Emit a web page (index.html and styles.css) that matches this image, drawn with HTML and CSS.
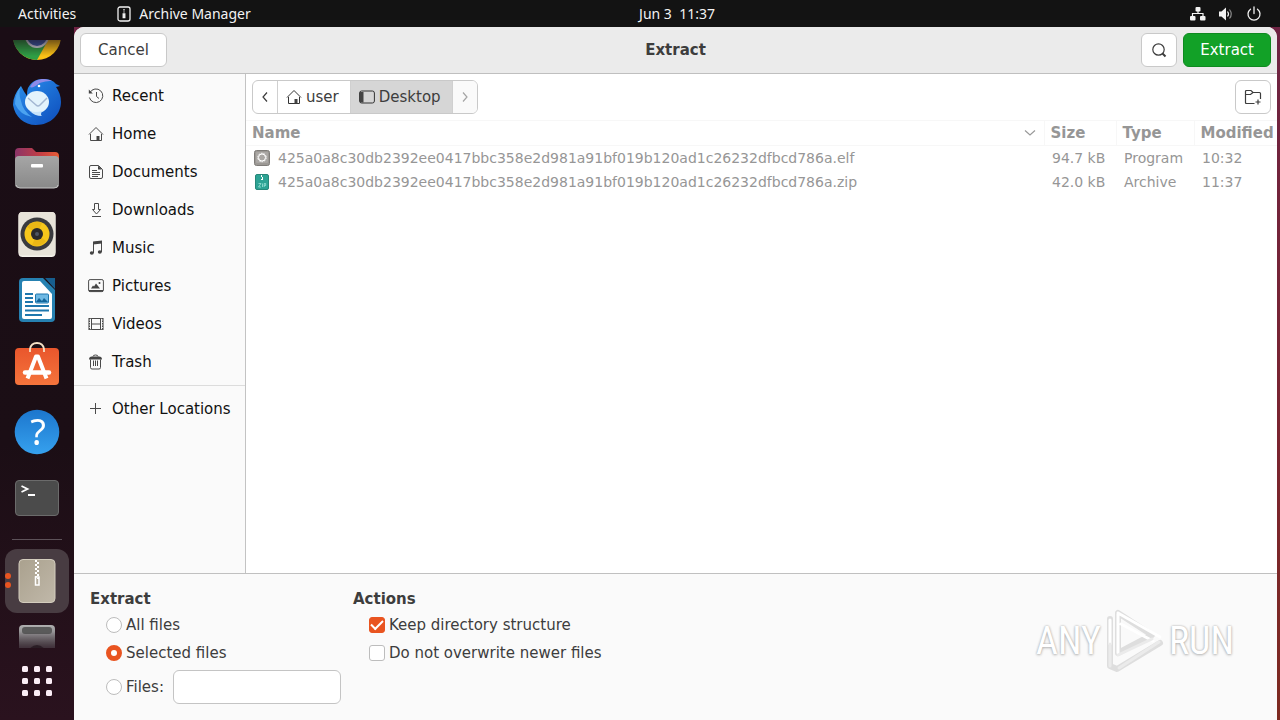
FILE: index.html
```html
<!DOCTYPE html>
<html lang="en">
<head>
<meta charset="utf-8">
<title>Extract</title>
<link rel="stylesheet" href="styles.css">
</head>
<body>
<header class="topbar">
  <div class="topbar-left">
    <button class="top-item">Activities</button>
    <button class="top-item app-menu">
      <svg width="14" height="16" viewBox="0 0 14 16" fill="none" stroke="#f2f2f2" stroke-width="1.3"><rect x="1" y="1" width="12" height="14" rx="2"/><path d="M7 3v1.500M7 5.500v1" /><path d="M6.200 8h1.600v3.500H6.200z" fill="#f2f2f2"/></svg>
      Archive Manager
    </button>
  </div>
  <button class="top-item clock">Jun 3&nbsp; 11:37</button>
  <div class="topbar-right">
    <svg width="16" height="16" viewBox="0 0 16 16" fill="#f2f2f2"><rect x="5.500" y="1" width="5" height="4.500" rx="1"/><rect x="0" y="10" width="5.500" height="4.500" rx="1"/><rect x="10" y="10" width="5.500" height="4.500" rx="1"/><path d="M2.500 10V7.500h10.500V10M8 5v3" fill="none" stroke="#f2f2f2" stroke-width="1.200"/></svg>
    <svg width="16" height="16" viewBox="0 0 16 16" fill="none"><path d="M1 5.500h2.500L8 1.500v13L3.500 10.500H1z" fill="#f2f2f2"/><path d="M9.500 5.500q2 2.500 0 5" stroke="#f2f2f2" stroke-width="1.200"/><path d="M11.500 3.500q3.500 4.500 0 9" stroke="#8a8a8a" stroke-width="1.200"/></svg>
    <svg width="16" height="16" viewBox="0 0 16 16" fill="none" stroke="#f2f2f2" stroke-width="1.300" stroke-linecap="round"><path d="M4.500 3.200a6 6 0 1 0 7 0M8 1v6.500"/></svg>
  </div>
</header>
<div class="desktop">
  <nav class="dock" aria-label="Dock">
    <div class="dock-scroll">
      <button class="dock-item" aria-label="Chrome"><svg width="48" height="48" viewBox="0 0 48 48"><circle cx="24" cy="24" r="24" fill="#fbc116"/><path d="M24 24 3 12A24 24 0 0 0 24 48L34 30z" fill="#2f9e45"/><path d="M24 24H45A24 24 0 0 0 3 12z" fill="#e33b2e"/><circle cx="24" cy="24" r="12" fill="#d8dce8"/><circle cx="24" cy="24" r="10" fill="#3b5cae"/></svg></button>
      <button class="dock-item" aria-label="Thunderbird"><svg width="48" height="48" viewBox="0 0 48 48"><defs><linearGradient id="tb" x1="0" y1="0" x2="1" y2="1"><stop offset="0" stop-color="#2c93ef"/><stop offset="1" stop-color="#0d4cbb"/></linearGradient></defs><path d="M8 8Q0 17 0 27c2 12 11 20 23 20 15 0 25-11 25-23 0-6-2-11-5-15l4-1-4-2C40 2 35 1 30 1c-7 0-12 3-15 9-1 3-1 5-1 8-2-3-4-6-6-10z" fill="url(#tb)"/><path d="M17 9c3-6 8-8 14-8 3 0 6 1 8 2-6 0-12 1-15 4-3 2-5 3-7 2z" fill="#8f8be8"/><path d="M8 8q-3 7 0 15 2 10 11 16-12-2-17-13Q2 16 8 8z" fill="#4ba3f0"/><ellipse cx="24" cy="24" rx="12" ry="11" fill="#e3f3fc"/><path d="m15 20 8 7q2 2 4 0l7-7" fill="none" stroke="#a3b7d2" stroke-width="1.500"/><path d="M17 33q6 2 12 0-2 4 0 5-8 0-12-5z" fill="#c7e3fa"/><circle cx="26" cy="8" r="1.300" fill="#fff"/></svg></button>
      <button class="dock-item" aria-label="Files"><svg width="48" height="48" viewBox="0 0 48 48"><defs><linearGradient id="fo"><stop stop-color="#8b3468"/><stop offset=".6" stop-color="#c63f43"/><stop offset="1" stop-color="#e95e36"/></linearGradient><linearGradient id="fg" x2="0" y2="1"><stop stop-color="#a6a6a6"/><stop offset="1" stop-color="#898989"/></linearGradient></defs><path d="M2 14V8q0-4 4-4h13l4 4h19q4 0 4 4v9H2z" fill="url(#fo)"/><rect x="2" y="12" width="44" height="32" rx="4" fill="url(#fg)"/><path d="M3 41q1 3 4 3h34q4 0 4-3" fill="none" stroke="#c5c5c5"/><rect x="18" y="20" width="12" height="3.500" rx="1" fill="#fff"/></svg></button>
      <button class="dock-item" aria-label="Rhythmbox"><svg width="48" height="48" viewBox="0 0 48 48"><rect x="5.500" y="2" width="37" height="45" rx="4" fill="#f6f3ec"/><rect x="5.500" y="2" width="37" height="43.500" rx="4" fill="#e8e3d9"/><circle cx="24" cy="24" r="16.500" fill="#3a3a3e"/><circle cx="24" cy="24" r="12.500" fill="#f6c61b"/><path d="M24 24 14 17a12 12 0 0 1 15-4zM24 24l9 7a12 12 0 0 1-14 4z" fill="#eab715"/><circle cx="24" cy="24" r="6" fill="#29292b"/><circle cx="24" cy="24" r="2" fill="#4d5563"/></svg></button>
      <button class="dock-item" aria-label="Writer"><svg width="48" height="48" viewBox="0 0 48 48"><path d="M10 2h20l12 12v28q0 4-4 4H10q-4 0-4-4V6q0-4 4-4z" fill="#2681b1"/><path d="M32 2h10v11z" fill="#175e8e"/><path d="M11 5h16l12 13v23q0 2-2 2H11q-2 0-2-2V7q0-2 2-2z" fill="#fff"/><path d="M12 18h8M12 22h8M12 26h8M12 30h24M12 34.500h24M12 39h17" stroke="#1e77ad" stroke-width="2"/><rect x="22.500" y="18" width="13" height="9" rx="1" fill="#6fb9e4" stroke="#1e77ad"/><path d="m23 26 3-4 3 3 2-3 4 4z" fill="#12659a"/></svg></button>
      <button class="dock-item" aria-label="Software"><svg width="48" height="48" viewBox="0 0 48 48"><defs><linearGradient id="sw" x2="0" y2="1"><stop stop-color="#e9562c"/><stop offset="1" stop-color="#f5743c"/></linearGradient></defs><rect x="2" y="6" width="44" height="37" rx="4" fill="url(#sw)"/><path d="M17 10V7q1-6 7-6t7 6v3" fill="none" stroke="#f6e1c6" stroke-width="1.800"/><path d="M14.500 36.500 23 14.500h2l8.500 22" fill="none" stroke="#fff" stroke-width="4" stroke-linejoin="round"/><path d="M12 30.500h24" stroke="#fff" stroke-width="4.500" stroke-linecap="round"/></svg></button>
      <button class="dock-item" aria-label="Help"><svg width="48" height="48" viewBox="0 0 48 48"><defs><linearGradient id="he" x2="0" y2="1"><stop stop-color="#1c76cd"/><stop offset="1" stop-color="#36a1ee"/></linearGradient></defs><circle cx="24" cy="24" r="22.300" fill="url(#he)"/><text x="25" y="37" text-anchor="middle" class="help-mark">?</text></svg></button>
      <button class="dock-item" aria-label="Terminal"><svg width="48" height="48" viewBox="0 0 48 48"><rect x="2.500" y="6.500" width="43" height="35" rx="3.500" fill="#4b4b4b" stroke="#6b6b6b"/><path d="m8.500 12 6 3-6 3M15 21h7" fill="none" stroke="#fff" stroke-width="1.800"/></svg></button>
      <hr class="dock-sep">
      <button class="dock-item active" aria-label="Archive Manager"><svg width="48" height="48" viewBox="0 0 48 48"><defs><linearGradient id="ar" x2="1" y2="1"><stop stop-color="#aaa18e"/><stop offset="1" stop-color="#c0b8a9"/></linearGradient></defs><rect x="6" y="2.500" width="36" height="43" rx="4" fill="url(#ar)" stroke="#d3ccbd"/><path d="M23 3v17" stroke="#fff" stroke-width="2" stroke-dasharray="2 2"/><path d="M25 5v17" stroke="#fff" stroke-width="2" stroke-dasharray="2 2"/><path d="M22.500 20h3.500v8h-3.500z" fill="none" stroke="#fff" stroke-width="1.500"/></svg></button>
      <button class="dock-item" aria-label="Disk"><svg width="48" height="48" viewBox="0 0 48 48"><defs><linearGradient id="di" x2="0" y2="1"><stop stop-color="#b0b0b0"/><stop offset=".5" stop-color="#5a545a"/></linearGradient></defs><rect x="6" y="2" width="36" height="44" rx="4" fill="url(#di)"/><rect x="9" y="4" width="30" height="7" rx="3" fill="#5a5a5a"/><circle cx="24" cy="31" r="9" fill="#2e282e"/></svg></button>
    </div>
    <button class="apps" aria-label="Show Applications"><svg width="32" height="32" viewBox="0 0 32 32" fill="#fbeef6"><rect x="1" y="1" width="6" height="6" rx="1.500"/><rect x="13" y="1" width="6" height="6" rx="1.500"/><rect x="25" y="1" width="6" height="6" rx="1.500"/><rect x="1" y="13" width="6" height="6" rx="1.500"/><rect x="13" y="13" width="6" height="6" rx="1.500"/><rect x="25" y="13" width="6" height="6" rx="1.500"/><rect x="1" y="25" width="6" height="6" rx="1.500"/><rect x="13" y="25" width="6" height="6" rx="1.500"/><rect x="25" y="25" width="6" height="6" rx="1.500"/></svg></button>
  </nav>
  <main class="window">
    <header class="headerbar">
      <div class="head-side"><button class="btn">Cancel</button></div>
      <h1 class="title">Extract</h1>
      <div class="head-side end">
        <button class="btn icon-btn" aria-label="Search"><svg width="16" height="16" viewBox="0 0 16 16" fill="none" stroke="#3d3d3d" stroke-width="1.200"><circle cx="7.500" cy="7.500" r="5.700"/><path d="m11.500 11.500 3 3" stroke-width="2"/></svg></button>
        <button class="btn suggested">Extract</button>
      </div>
    </header>
    <div class="content">
      <aside class="sidebar">
        <a class="place" href="#"><svg class="ico" viewBox="0 0 16 16"><path d="M2 4.500a6.800 6.800 0 1 1-.6 5M8.500 4v4.500l2.500 2"/><path d="M.8 1.500v4h4z" class="solid"/></svg>Recent</a>
        <a class="place" href="#"><svg class="ico" viewBox="0 0 16 16"><path d="m1 8.500 7-7 7 7M2.500 8v6.500h11V8"/><path d="M8.500 10h3v4.500h-3z" class="solid"/></svg>Home</a>
        <a class="place" href="#"><svg class="ico" viewBox="0 0 16 16"><path d="M3 1.500h7.500l4 4V13q0 1.500-1.500 1.500H3Q1.500 14.500 1.500 13V3Q1.500 1.500 3 1.500zM4 6.500h5M4 8.500h8M4 10.500h8M4 12.500h6"/><path d="M10 1.500v4h4z" class="solid"/></svg>Documents</a>
        <a class="place" href="#"><svg class="ico" viewBox="0 0 16 16"><path d="M6.500 1.500h4v6h2l-4 4.500-4-4.500h2zM4 14.500h9"/></svg>Downloads</a>
        <a class="place" href="#"><svg class="ico" viewBox="0 0 16 16"><path d="M5.500 13V2.500l8-1V12"/><path d="M5 1.500l9-1v3l-9 1z" class="solid"/><ellipse cx="3.800" cy="13" rx="2" ry="1.700" class="solid"/><ellipse cx="11.800" cy="12" rx="2" ry="1.700" class="solid"/></svg>Music</a>
        <a class="place" href="#"><svg class="ico" viewBox="0 0 16 16"><rect x=".6" y="1.600" width="14.800" height="12" rx="1.500"/><path d="M1 12h14v1.500H1zM3 10.500l2-3 1 1 2-3 4 5z" class="solid"/><circle cx="11.500" cy="5" r="1" class="solid"/></svg>Pictures</a>
        <a class="place" href="#"><svg class="ico" viewBox="0 0 16 16"><path d="M3.500 2.500h9v11h-9zM3.500 8h9"/><path d="M1.500 2v12M14.500 2v12" stroke-dasharray="1.500 1"/><path d="M.8 2v12M15.200 2v12M1 2.500h14M1 13.500h14" stroke-width=".8"/></svg>Videos</a>
        <a class="place" href="#"><svg class="ico" viewBox="0 0 16 16"><path d="M2.500 5.500v8q0 1.500 1.500 1.500h7q1.500 0 1.500-1.500v-8M5.500 6.500V12M7.500 6.500V12M9.500 6.500V12M5 2.500q0-1.500 2.500-1.500T10 2.500"/><path d="M1 5.500q0-3 3-3h7q3 0 3 3z" class="solid"/></svg>Trash</a>
        <hr class="side-sep">
        <a class="place" href="#"><svg class="ico" viewBox="0 0 16 16"><path d="M7.500 2v11M2 7.500h11"/></svg>Other Locations</a>
      </aside>
      <section class="browser">
        <div class="pathrow">
          <div class="pathbar">
            <button class="seg arrow" aria-label="Back"><svg width="12" height="16" viewBox="0 0 12 16" fill="none" stroke="#3d3d3d" stroke-width="1.200"><path d="M8 3.500 4 8l4 4.500"/></svg></button>
            <button class="seg"><svg class="ico dark" viewBox="0 0 16 16"><path d="m1 8.500 7-7 7 7M2.500 8v6.500h11V8"/><path d="M8.500 10h3v4.500h-3z" class="solid"/></svg>user</button>
            <button class="seg current"><svg class="ico dark" viewBox="0 0 16 16"><rect x=".6" y="2" width="14.800" height="12" rx="2"/><path d="M1 3h3.500v10.500H1z" class="solid"/></svg>Desktop</button>
            <button class="seg arrow" aria-label="Forward" disabled><svg width="12" height="16" viewBox="0 0 12 16" fill="none" stroke="#a5a5a5" stroke-width="1.200"><path d="m4 3.500 4 4.500-4 4.500"/></svg></button>
          </div>
          <button class="btn icon-btn" aria-label="Create Folder"><svg width="18" height="16" viewBox="0 0 18 16" fill="none" stroke="#3d3d3d" stroke-width="1.200"><path d="M10.500 14.500h-8Q1.500 14.500 1.500 13.500v-11q0-1 1-1H7l2 2h6.500q1 0 1 1V10M1.500 5.500h5L9 3.500M14 10.500v5M11.500 13h5"/></svg></button>
        </div>
        <table class="files">
          <colgroup><col><col class="c-size"><col class="c-type"><col class="c-mod"></colgroup>
          <thead><tr><th><div class="th-name">Name<svg width="12" height="8" viewBox="0 0 12 8" fill="none" stroke="#9a9a9a" stroke-width="1.200"><path d="m1 1.500 5 4.500 5-4.500"/></svg></div></th><th>Size</th><th>Type</th><th>Modified</th></tr></thead>
          <tbody>
            <tr><td><div class="fname"><svg width="16" height="16" viewBox="0 0 16 16"><rect x=".5" y=".5" width="15" height="15" rx="2" fill="#9b9894" stroke="#7f7c79"/><rect x="2" y="2" width="12" height="11" rx="1" fill="#aaa7a4"/><circle cx="8" cy="7.500" r="4.200" fill="none" stroke="#fff" stroke-width="1" stroke-dasharray="1.800 .8"/><circle cx="8" cy="7.500" r="3.500" fill="none" stroke="#fff"/></svg>425a0a8c30db2392ee0417bbc358e2d981a91bf019b120ad1c26232dfbcd786a.elf</div></td><td>94.7 kB</td><td>Program</td><td>10:32</td></tr>
            <tr><td><div class="fname"><svg width="16" height="16" viewBox="0 0 16 16"><rect x="1.500" y=".5" width="13" height="15" rx="1.500" fill="#2da394" stroke="#278779"/><path d="M7.500 1v2M8.500 3v2M7 5.500h2" stroke="#fff"/><path d="M4.500 9.500h2.500L4.500 13H7M8.500 9.500V13M10.200 13V9.500h1.500v2h-1.500" fill="none" stroke="#9ce2d7" stroke-width=".8"/></svg>425a0a8c30db2392ee0417bbc358e2d981a91bf019b120ad1c26232dfbcd786a.zip</div></td><td>42.0 kB</td><td>Archive</td><td>11:37</td></tr>
          </tbody>
        </table>
      </section>
    </div>
    <form class="options">
      <fieldset class="group">
        <legend>Extract</legend>
        <label class="opt"><input type="radio" name="which">All files</label>
        <label class="opt"><input type="radio" name="which" checked>Selected files</label>
        <div class="filesrow"><label class="opt"><input type="radio" name="which">Files:</label><input class="entry" type="text" aria-label="Files to extract"></div>
      </fieldset>
      <fieldset class="group">
        <legend>Actions</legend>
        <label class="opt"><input type="checkbox" checked>Keep directory structure</label>
        <label class="opt"><input type="checkbox">Do not overwrite newer files</label>
      </fieldset>
    </form>
  </main>
</div>
<div class="watermark"><span>ANY</span><svg width="60" height="66" viewBox="0 0 60 66" fill="none" stroke-linejoin="round" stroke-linecap="round"><path d="M13 5v40l34-18zM5 11v47l7 3 43-26" stroke="#dedede" stroke-width="6"/><path d="M13 5v40M13 5l42 24M16 16l32 17M5 12v24" stroke="#fff" stroke-width="3"/><path d="M5 36v22M13 47l34-16M14 60l40-26" stroke="#ebebeb" stroke-width="3"/></svg><span>RUN</span></div>
</body>
</html>
```
FILE: styles.css
```css
* { box-sizing: border-box; }
html, body { height: 100%; margin: 0; }
body {
  display: flex;
  flex-direction: column;
  overflow: hidden;
  background: linear-gradient(#6d2344, #7a2430 60%, #7d2a20);
  color: #3d3d3d;
  font: 15px/18px "DejaVu Sans", sans-serif;
}
button, input { font: inherit; color: inherit; }
button { margin: 0; padding: 0; border: 0; background: none; }
svg { display: block; flex: none; }

.topbar {
  display: grid;
  grid-template-columns: 1fr auto 1fr;
  align-items: center;
  height: 27px;
  padding: 0 18px;
  background: #131313;
  color: #f2f2f2;
  font: 14px/20px "Noto Sans", sans-serif;
}
.topbar-left { display: flex; gap: 41px; }
.top-item { display: flex; align-items: center; white-space: nowrap; }
.app-menu { gap: 8px; }
.clock { padding-left: 74px; }
.topbar-right { display: flex; justify-content: flex-end; gap: 12px; }

.desktop { display: flex; flex: 1; min-height: 0; padding-right: 3px; }
.dock {
  display: flex;
  flex-direction: column;
  width: 74px;
  padding: 13px 0 6px;
  background: linear-gradient(#1a0d15, #1b0e15 60%, #2a121e);
}
.dock-scroll {
  flex: 1;
  min-height: 0;
  overflow: hidden;
  mask-image: linear-gradient(rgba(0, 0, 0, .4), #000 16px, #000 592px, rgba(0, 0, 0, .5));
}
.dock-item {
  display: flex;
  align-items: center;
  justify-content: center;
  position: relative;
  width: 100%;
  height: 66px;
}
.dock-item:first-child { margin-top: -37px; }
.dock-sep { height: 1px; margin: 8px 12px; border: 0; background: #5d5259; }
.active::before {
  content: "";
  position: absolute;
  inset: 1px 5px;
  border-radius: 12px;
  background: #483c42;
}
.active::after {
  content: "";
  position: absolute;
  left: 5px;
  top: 25px;
  width: 6px;
  height: 6px;
  border-radius: 50%;
  background: #e95420;
  box-shadow: 0 9px #e95420;
}
.active svg { position: relative; }
.help-mark { fill: #fff; font: 36px "Noto Sans", sans-serif; }
.apps { display: flex; align-items: center; justify-content: center; height: 66px; }

.window {
  display: flex;
  flex: 1;
  flex-direction: column;
  min-width: 0;
  overflow: hidden;
  border-radius: 10px 10px 0 0;
  background: #fff;
}
.headerbar {
  display: flex;
  align-items: center;
  padding: 6px;
  border-bottom: 1px solid #bfbfbf;
  background: #ebebeb;
}
.head-side { display: flex; flex: 1; gap: 6px; }
.end { justify-content: flex-end; }
.title { margin: 0; font-size: 15px; line-height: 18px; }
.btn {
  display: flex;
  align-items: center;
  justify-content: center;
  height: 34px;
  min-width: 87px;
  padding: 0 16px;
  border: 1px solid #c9c9c9;
  border-radius: 6px;
  background: #fff;
}
.icon-btn { width: 36px; min-width: 0; padding: 0; }
.suggested { border-color: #0f8a20; background: #12a127; color: #fff; }

.content { display: flex; flex: 1; min-height: 0; }
.sidebar {
  width: 172px;
  padding-top: 3px;
  border-right: 1px solid #c3c3c3;
  background: #fafafa;
}
.place {
  display: flex;
  align-items: center;
  gap: 8px;
  height: 38px;
  padding-left: 14px;
  color: #111;
  text-decoration: none;
  white-space: nowrap;
}
.side-sep { height: 1px; margin: 4px 0; border: 0; background: #dcdcdc; }
.ico { width: 16px; height: 16px; fill: none; stroke: #4a4a4a; }
.dark { stroke: #333; }
.solid { fill: #444; stroke: none; }

.browser { flex: 1; min-width: 0; }
.pathrow { display: flex; justify-content: space-between; padding: 6px; }
.pathbar {
  display: flex;
  height: 34px;
  overflow: hidden;
  border: 1px solid #c9c9c9;
  border-radius: 6px;
}
.seg { display: flex; align-items: center; gap: 4px; padding: 0 11px 0 8px; border-left: 1px solid #d0d0d0; }
.seg:first-child { border-left: 0; }
.arrow { padding: 0 6px; }
.arrow:disabled { background: #fafafa; }
.current { background: #d6d6d6; }

.files { width: 100%; table-layout: fixed; border-collapse: collapse; color: #969696; font-size: 14px; text-align: left; white-space: nowrap; }
.c-size { width: 72px; }
.c-type { width: 78px; }
.c-mod { width: 83px; }
.files th { height: 25px; padding: 0 5px 0 6px; border: solid #f7f7f7; border-width: 1px 1px 1px 0; font-size: 15px; }
.files th:last-child { border-right: 0; }
.files td { height: 24px; padding: 0 8px; }
.th-name { display: flex; align-items: center; justify-content: space-between; padding-right: 3px; }
.fname { display: flex; align-items: center; gap: 8px; }

.options {
  display: flex;
  gap: 12px;
  padding: 16px;
  border-top: 1px solid #c0c0c0;
  background: #fafafa;
}
.group { min-width: 0; margin: 0; padding: 3px 0 0; border: 0; }
.group legend { padding: 0; font-weight: bold; }
.opt { display: flex; align-items: center; gap: 4px; height: 28px; margin-left: 16px; }
.opt input {
  appearance: none;
  flex: none;
  width: 16px;
  height: 16px;
  margin: 0;
  border: 1px solid #bdbdbd;
  border-radius: 3px;
  background: #fff;
}
.opt input[type="radio"] { border-radius: 50%; }
.opt input[type="radio"]:checked { border: 5px solid #e95420; }
.opt input[type="checkbox"]:checked { display: grid; place-items: center; border-color: #e95420; background: #e95420; }
.opt input[type="checkbox"]:checked::before {
  content: "";
  width: 10px;
  height: 5px;
  margin-bottom: 3px;
  border: solid #fff;
  border-width: 0 0 2px 2px;
  rotate: -45deg;
}
.filesrow { display: flex; align-items: center; gap: 9px; margin-top: 3px; }
.entry { width: 168px; height: 34px; padding: 0 8px; border: 1px solid #c4c4c4; border-radius: 6px; background: #fff; }

.watermark {
  position: absolute;
  right: 46px;
  bottom: 46px;
  display: flex;
  align-items: center;
  gap: 4px;
  color: #fff;
  font: 38px/66px "Liberation Sans Narrow", "Roboto Condensed", "Liberation Sans", sans-serif;
  text-shadow: 0 0 2px #aaa, 0 1px 3px #bbb;
  pointer-events: none;
}
```
